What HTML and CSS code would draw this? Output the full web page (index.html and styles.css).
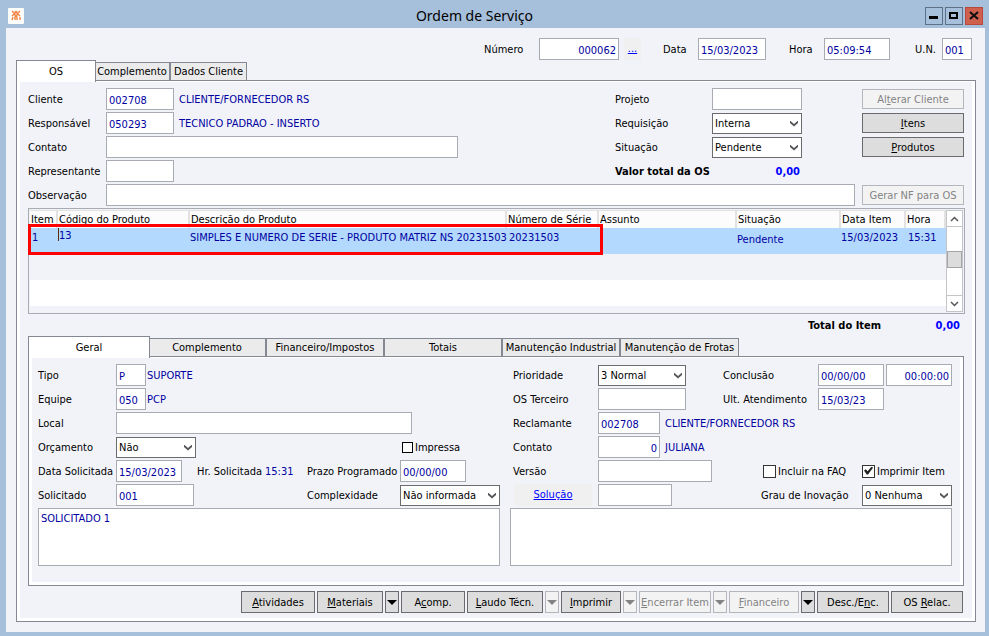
FILE: index.html
```html
<!DOCTYPE html>
<html lang="pt-BR">
<head>
  <meta charset="UTF-8" />
  <meta name="viewport" content="width=device-width, initial-scale=1.0"/>
  <title>Ordem de Serviço</title>
  <link rel="stylesheet" href="styles.css">
</head>
<body>
  <header class="titlebar">
    <svg class="app-icon" width="16" height="16" viewBox="0 0 16 16" aria-hidden="true">
      <rect width="16" height="16" rx="1" fill="#ffffff"/>
      <g fill="none" stroke="#f0813f" stroke-width="1.4">
        <path d="M4 3l3 3M12 3L9 6M7 3l1 2 1-2"/>
        <path d="M4 8l2-2 2 2 2-2 2 2"/>
        <path d="M4 12l1-3M7 12v-3l1-1 1 1v3M12 12V9"/>
      </g>
    </svg>
    <h1 class="title">Ordem de Serviço</h1>
    <div class="window-buttons">
      <button class="win-btn" aria-label="Minimizar"><svg width="16" height="16" viewBox="0 0 16 16"><path d="M3 8h9v3H3z"/></svg></button>
      <button class="win-btn" aria-label="Maximizar"><svg width="16" height="16" viewBox="0 0 16 16"><path d="M4 5h7v5H4z" fill="none" stroke="#000" stroke-width="2"/></svg></button>
      <button class="win-btn close" aria-label="Fechar"><svg width="16" height="16" viewBox="0 0 16 16"><path d="M4 4l8 7M12 4l-8 7" stroke="#111" stroke-width="2.2"/></svg></button>
    </div>
  </header>

  <main class="client">
    <div class="header">
      <label for="numero">Número</label>
      <div class="field">
        <input class="w80 right" id="numero" type="text" value="000062">
        <a class="more" href="#">...</a>
      </div>
      <label for="data">Data</label>
      <div class="field"><input class="w68" id="data" type="text" value="15/03/2023"></div>
      <label for="hora">Hora</label>
      <div class="field"><input class="w66" id="hora" type="text" value="05:09:54"></div>
      <label for="un">U.N.</label>
      <div class="field"><input class="w30" id="un" type="text" value="001"></div>
    </div>

    <div class="tabs">
      <button class="tab active tab-os">OS</button>
      <button class="tab tab-top">Complemento</button>
      <button class="tab tab-top">Dados Cliente</button>
    </div>

    <section class="panel">
      <div class="panel-body outer">
        <div class="os-form">
          <label for="cliente">Cliente</label>
          <div class="field"><input class="w68" id="cliente" type="text" value="002708"><span class="value">CLIENTE/FORNECEDOR RS</span></div>
          <label for="projeto">Projeto</label>
          <div class="field"><input class="w90" id="projeto" type="text"></div>
          <button class="btn" disabled>Al<u>t</u>erar Cliente</button>

          <label for="responsavel">Responsável</label>
          <div class="field"><input class="w68" id="responsavel" type="text" value="050293"><span class="value">TECNICO PADRAO - INSERTO</span></div>
          <label for="requisicao">Requisição</label>
          <div class="field"><span class="select w90"><select id="requisicao"><option>Interna</option></select></span></div>
          <button class="btn"><u>I</u>tens</button>

          <label for="contato">Contato</label>
          <div class="field"><input class="w352" id="contato" type="text"></div>
          <label for="situacao">Situação</label>
          <div class="field"><span class="select w90"><select id="situacao"><option>Pendente</option></select></span></div>
          <button class="btn"><u>P</u>rodutos</button>

          <label for="representante">Representante</label>
          <div class="field"><input class="w68" id="representante" type="text"></div>
          <div class="total-os"><span>Valor total da OS</span><span class="amount">0,00</span></div>

          <label for="observacao">Observação</label>
          <div class="field wide"><input id="observacao" type="text"></div>
          <button class="btn" disabled>Gerar NF para OS</button>
        </div>

        <div class="grid-box">
          <div class="grid-table">
            <table>
              <thead>
                <tr>
                  <th class="c-item">Item</th>
                  <th class="c-codigo">Código do Produto</th>
                  <th>Descrição do Produto</th>
                  <th class="c-serie">Número de Série</th>
                  <th class="c-assunto">Assunto</th>
                  <th class="c-situacao">Situação</th>
                  <th class="c-data">Data Item</th>
                  <th class="c-hora">Hora</th>
                </tr>
              </thead>
              <tbody>
                <tr class="selected">
                  <td>1</td>
                  <td class="editing"><span class="caret"></span>13</td>
                  <td class="flush">SIMPLES E NUMERO DE SERIE - PRODUTO MATRIZ NS 20231503</td>
                  <td>20231503</td>
                  <td></td>
                  <td class="low">Pendente</td>
                  <td class="flush">15/03/2023</td>
                  <td>15:31</td>
                </tr>
                <tr class="alt"><td colspan="8"></td></tr>
                <tr><td colspan="8"></td></tr>
              </tbody>
            </table>
            <div class="highlight"></div>
          </div>
          <div class="scrollbar">
            <button class="sb-btn" aria-label="Rolar para cima"><svg width="9" height="6" viewBox="0 0 9 6"><path d="M1 5l3.500-3.500L8 5"/></svg></button>
            <div class="thumb"></div>
            <button class="sb-btn" aria-label="Rolar para baixo"><svg width="9" height="6" viewBox="0 0 9 6"><path d="M1 1l3.500 3.500L8 1"/></svg></button>
          </div>
        </div>

        <div class="total-item"><span>Total do Item</span><span class="amount">0,00</span></div>

        <div class="tabs">
          <button class="tab active tab-geral">Geral</button>
          <button class="tab">Complemento</button>
          <button class="tab">Financeiro/Impostos</button>
          <button class="tab">Totais</button>
          <button class="tab">Manutenção Industrial</button>
          <button class="tab">Manutenção de Frotas</button>
        </div>

        <section class="panel">
          <div class="panel-body inner">
            <div class="left-form">
              <label for="tipo">Tipo</label>
              <div class="field tight rest"><input class="w30" id="tipo" type="text" value="P"><span class="value">SUPORTE</span></div>

              <label for="equipe">Equipe</label>
              <div class="field tight rest"><input class="w30" id="equipe" type="text" value="050"><span class="value">PCP</span></div>

              <label for="local">Local</label>
              <div class="field rest"><input class="w296" id="local" type="text"></div>

              <label for="orcamento">Orçamento</label>
              <span class="select w80"><select id="orcamento"><option>Não</option></select></span>
              <label class="check impressa"><input type="checkbox">Impressa</label>

              <label for="data-sol">Data Solicitada</label>
              <div class="field"><input class="w66" id="data-sol" type="text" value="15/03/2023"></div>
              <span>Hr. Solicitada</span>
              <span class="value">15:31</span>
              <label for="prazo">Prazo Programado</label>
              <div class="field"><input class="w66" id="prazo" type="text" value="00/00/00"></div>

              <label for="solicitado">Solicitado</label>
              <div class="field"><input class="w78" id="solicitado" type="text" value="001"></div>
              <label class="complex" for="complexidade">Complexidade</label>
              <span class="select w100"><select id="complexidade"><option>Não informada</option></select></span>
            </div>

            <div class="right-form">
              <label for="prioridade">Prioridade</label>
              <span class="select w88"><select id="prioridade"><option>3 Normal</option></select></span>
              <label class="two" for="conclusao">Conclusão</label>
              <div class="field dates two"><input class="w66" id="conclusao" type="text" value="00/00/00"><input class="w66 right" type="text" value="00:00:00" aria-label="Hora da conclusão"></div>

              <label for="terceiro">OS Terceiro</label>
              <div class="field"><input class="w88" id="terceiro" type="text"></div>
              <label class="two" for="atendimento">Ult. Atendimento</label>
              <div class="field two"><input class="w66" id="atendimento" type="text" value="15/03/23"></div>

              <label for="reclamante">Reclamante</label>
              <div class="field rest"><input class="w62" id="reclamante" type="text" value="002708"><span class="value">CLIENTE/FORNECEDOR RS</span></div>

              <label for="contato-item">Contato</label>
              <div class="field rest"><input class="w62 right" id="contato-item" type="text" value="0"><span class="value">JULIANA</span></div>

              <label for="versao">Versão</label>
              <div class="field"><input class="w114" id="versao" type="text"></div>
              <label class="check faq"><input type="checkbox">Incluir na FAQ</label>
              <label class="check"><input type="checkbox" checked>Imprimir Item</label>

              <a class="solucao" href="#">Solução</a>
              <div class="field"><input class="w74" type="text" aria-label="Solução"></div>
              <label class="inovacao" for="inovacao">Grau de Inovação</label>
              <span class="select w90"><select id="inovacao"><option>0 Nenhuma</option></select></span>
            </div>

            <textarea aria-label="Texto do solicitado">SOLICITADO 1</textarea>
            <textarea aria-label="Texto da solução"></textarea>
          </div>
        </section>

        <div class="toolbar">
          <button class="btn w74"><u>A</u>tividades</button>
          <button class="btn w66"><u>M</u>ateriais</button>
          <button class="btn drop" aria-label="Opções de materiais"></button>
          <button class="btn w64">A<u>c</u>omp.</button>
          <button class="btn w76"><u>L</u>audo Técn.</button>
          <button class="btn drop" aria-label="Opções de laudo" disabled></button>
          <button class="btn w60"><u>I</u>mprimir</button>
          <button class="btn drop" aria-label="Opções de impressão" disabled></button>
          <button class="btn w72" disabled><u>E</u>ncerrar Item</button>
          <button class="btn drop" aria-label="Opções de encerramento" disabled></button>
          <button class="btn w70" disabled><u>F</u>inanceiro</button>
          <button class="btn drop" aria-label="Opções financeiras"></button>
          <button class="btn w72">Desc./E<u>n</u>c.</button>
          <button class="btn w72">OS <u>R</u>elac.</button>
        </div>
      </div>
    </section>
  </main>
</body>
</html>
```
FILE: styles.css
```css
* {
  box-sizing: border-box;
}

body {
  margin: 0;
  padding: 0 4px 4px 6px;
  min-height: 100vh;
  background: #a6bfdb;
  font-family: Tahoma, "DejaVu Sans Condensed", "DejaVu Sans", sans-serif;
  font-size: 11px;
  line-height: 15px;
  color: #000;
  white-space: nowrap;
}

input, select, button, textarea {
  font: inherit;
  margin: 0;
  border-radius: 0;
}

/* title bar */
.titlebar {
  display: flex;
  align-items: center;
  height: 28px;
  padding: 4px 2px 0;
}

.title {
  flex: 1;
  margin: 0;
  text-align: center;
  font-family: "Segoe UI", "Noto Sans", sans-serif;
  font-size: 14px;
  line-height: 20px;
  font-weight: normal;
}

.window-buttons {
  display: flex;
  gap: 2px;
}

.win-btn {
  width: 18px;
  height: 18px;
  padding: 0;
  border: 1px solid #5f7186;
  background: #a6bfdb;
}

.win-btn svg {
  display: block;
}

.win-btn.close {
  background: #d0604e;
  border-color: #b9493b;
}

.client {
  background: #f2f3f9;
  padding: 10px 9px 10px 10px;
}

/* fields */
input[type="text"] {
  height: 22px;
  padding: 2px 2px 0;
  border: 1px solid #a9abb3;
  background: #fff;
  color: #0000a0;
}

input.right {
  text-align: right;
}

.value {
  color: #0000a0;
}

.field {
  display: flex;
  align-items: center;
  gap: 5px;
}

.field.tight {
  gap: 1px;
}

.select {
  position: relative;
  display: block;
  height: 21px;
}

.select select {
  appearance: none;
  display: block;
  width: 100%;
  height: 100%;
  padding: 0 2px;
  border: 1px solid #6b6b6e;
  background: #fff;
  color: #000;
}

.select::after {
  content: "";
  position: absolute;
  right: 4px;
  top: 8px;
  width: 8px;
  height: 6px;
  background: #55565a;
  clip-path: polygon(0 0, 50% 60%, 100% 0, 100% 40%, 50% 100%, 0 40%);
  pointer-events: none;
}

.check {
  display: flex;
  align-items: center;
  gap: 2px;
}

.check input {
  appearance: none;
  position: relative;
  width: 13px;
  height: 13px;
  border: 1px solid #333;
  background: #fff;
}

.check input:checked::after {
  content: "";
  position: absolute;
  left: 1px;
  top: 1px;
  width: 9px;
  height: 8px;
  background: #222;
  clip-path: polygon(0 50%, 20% 35%, 40% 60%, 85% 0, 100% 15%, 45% 100%, 30% 100%);
}

textarea {
  display: block;
  width: 100%;
  height: 58px;
  padding: 2px;
  border: 1px solid #a9abb3;
  background: #fff;
  color: #0000a0;
  resize: none;
}

.w30 { width: 30px; }
.w60 { width: 60px; }
.w62 { width: 62px; }
.w64 { width: 64px; }
.w66 { width: 66px; }
.w68 { width: 68px; }
.w70 { width: 70px; }
.w72 { width: 72px; }
.w74 { width: 74px; }
.w76 { width: 76px; }
.w78 { width: 78px; }
.w80 { width: 80px; }
.w88 { width: 88px; }
.w90 { width: 90px; }
.w100 { width: 100px; }
.w114 { width: 114px; }
.w296 { width: 296px; }
.w352 { width: 352px; }

/* buttons */
.btn {
  height: 20px;
  padding: 0;
  border: 1px solid #6b6b6e;
  background: #dddddd;
  color: #000;
  text-align: center;
}

.btn:disabled {
  border-color: #b4b6bb;
  background: #f3f3f4;
  color: #838383;
}

/* top line */
.header {
  display: grid;
  grid-template-columns: 55px 124px 35px 91px 35px 91px 27px 30px;
  justify-content: end;
  align-items: center;
  padding-right: 4px;
}

.more, .solucao {
  height: 22px;
  line-height: 22px;
  background: #f0f0f0;
  color: #0000ff;
  text-align: center;
}

.more {
  width: 17px;
}

/* tabs */
.tabs {
  display: flex;
  align-items: flex-end;
  height: 20px;
}

.tab {
  width: 118px;
  height: 19px;
  margin-bottom: -1px;
  padding: 0;
  border: 1px solid #848893;
  border-left-width: 0;
  border-right-width: 2px;
  background: #ebebeb;
  color: #000;
}

.tab:last-child {
  border-right-width: 1px;
}

.tab.active {
  position: relative;
  height: 22px;
  margin-right: -1px;
  margin-bottom: -2px;
  border-left-width: 1px;
  border-right-width: 1px;
  border-bottom: 0;
  background: #fff;
}

.tab-os { width: 80px; }
.tab-top { width: 76px; }
.tab-geral { width: 122px; }

.panel {
  border: 1px solid #848893;
  background: #fff;
  padding: 1px 3px 3px;
}

.panel-body {
  background: #f2f3f9;
}

.outer {
  padding: 5px 8px;
}

/* order data */
.os-form {
  display: grid;
  grid-template-columns: 78px 1fr 97px 143px 109px;
  grid-auto-rows: 24px;
  align-items: center;
}

.os-form .btn {
  justify-self: end;
  width: 102px;
}

.total-os {
  grid-column: 3 / 6;
  display: grid;
  grid-template-columns: 97px 88px;
}

.total-os, .total-item {
  font-weight: bold;
}

.amount {
  color: #0000ff;
  text-align: right;
}

.field.wide {
  grid-column: 2 / 5;
}

.field.wide input {
  flex: 1;
}

/* items */
.grid-box {
  display: flex;
  height: 106px;
  margin: 1px -1px 0 0;
  padding: 1px;
  border: 1px solid #a9abb3;
}

.grid-table {
  position: relative;
  flex: 1;
}

table {
  width: 100%;
  table-layout: fixed;
  border-spacing: 0;
}

th {
  height: 18px;
  padding: 0 1px;
  border-right: 2px solid #e2e2e2;
  border-top: 1px solid #e2e2e2;
  background: #fcfcfc;
  font-weight: normal;
  text-align: left;
}

td {
  height: 26px;
  padding: 2px 2px 0;
  background: #fff;
  vertical-align: top;
}

td.flush {
  padding-left: 0;
}

td.editing {
  padding: 0;
}

td.low {
  padding: 4px 0 0;
}

.caret {
  display: inline-block;
  width: 1px;
  height: 13px;
  background: #5a3010;
  vertical-align: top;
}

.selected td {
  background: #b3d9ff;
  color: #0000a0;
}

.alt td {
  background: #f2f3f9;
}

.c-item { width: 28px; }
.c-codigo { width: 132px; }
.c-serie { width: 92px; }
.c-assunto { width: 138px; }
.c-situacao { width: 104px; }
.c-data { width: 65px; }
.c-hora { width: 40px; }

.highlight {
  position: absolute;
  left: -2px;
  right: 343px;
  top: 14px;
  height: 31px;
  border: 3px solid #ff0000;
}

.scrollbar {
  display: flex;
  flex-direction: column;
  justify-content: space-between;
  width: 17px;
  border: 1px solid #c4c5c9;
  background: #fff;
}

.sb-btn {
  height: 16px;
  padding: 0;
  border: 0;
  border-bottom: 1px solid #c4c5c9;
  background: #fff;
}

.sb-btn:last-child {
  border-top: 1px solid #c4c5c9;
  border-bottom: 0;
}

.sb-btn svg {
  display: block;
  margin: 0 auto;
  fill: none;
  stroke: #55565a;
  stroke-width: 1.5;
}

.thumb {
  height: 17px;
  margin-bottom: 4px;
  border: 1px solid #a4a4a6;
  background: #dcdcdc;
}

.total-item {
  display: grid;
  grid-template-columns: 78px 74px;
  justify-content: end;
  align-items: center;
  height: 22px;
  padding-right: 4px;
}

/* item data */
.inner {
  display: grid;
  grid-template-columns: minmax(0, 462fr) minmax(0, 442fr);
  column-gap: 10px;
  padding: 5px 8px 16px 6px;
}

.left-form, .right-form {
  display: grid;
  grid-auto-rows: 24px;
  align-items: center;
  margin-bottom: 1px;
}

.left-form {
  grid-template-columns: 78px 81px 68px 42px 93px 1fr;
}

.right-form {
  grid-template-columns: 88px 1fr 38px 57px 44px 90px;
}

.right-form > label:not([class]) {
  padding-left: 3px;
}

.rest {
  grid-column: 2 / -1;
}

.two {
  grid-column: span 2;
}

.field.dates {
  gap: 2px;
}

.impressa {
  grid-column: 6;
  padding-left: 2px;
}

.impressa input {
  width: 11px;
  height: 11px;
  border-color: #000;
}

.complex {
  grid-column: 5;
}

.faq {
  grid-column: 4 / 6;
  padding-left: 2px;
}

.inovacao {
  grid-column: 4 / 6;
}

.solucao {
  margin: 0 6px 0 4px;
}

/* bottom actions */
.toolbar {
  display: flex;
  justify-content: flex-end;
  gap: 2px;
  margin-top: 5px;
  padding-right: 1px;
}

.toolbar .btn {
  height: 22px;
}

.drop {
  display: flex;
  align-items: center;
  justify-content: center;
  width: 14px;
}

.drop::after {
  content: "";
  border: 5px solid transparent;
  border-top-color: currentColor;
  border-bottom: 0;
}
```
